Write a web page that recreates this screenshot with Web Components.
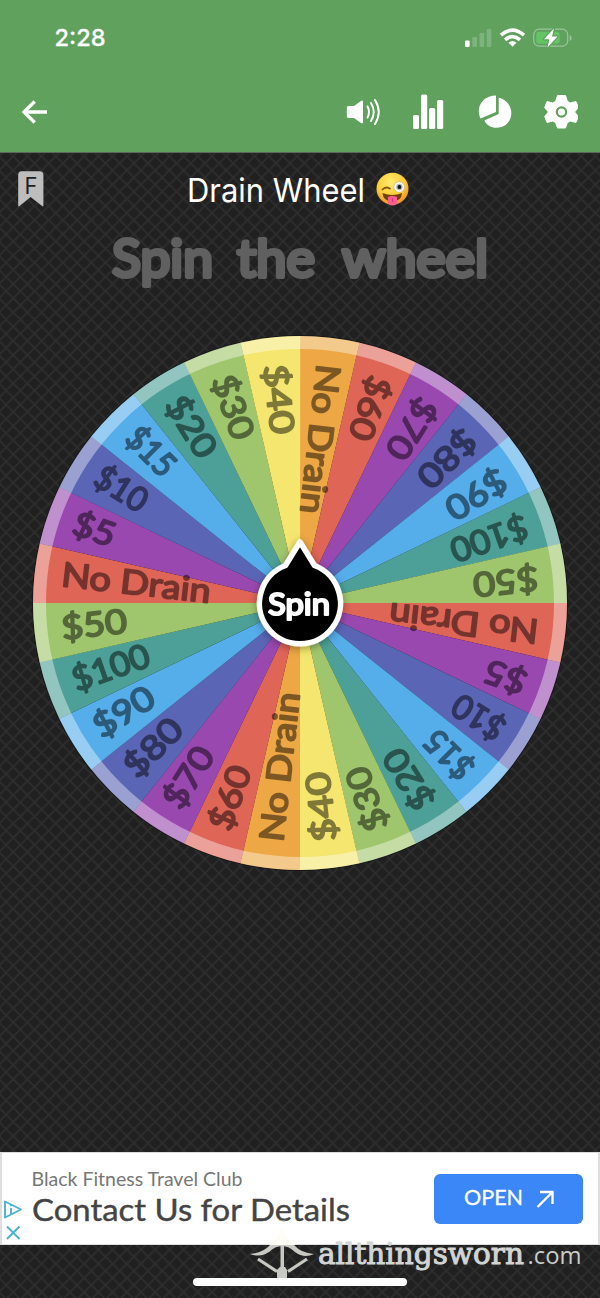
<!DOCTYPE html>
<html lang="en"><head><meta charset="utf-8"><title>Drain Wheel</title>
<style>html,body{margin:0;width:600px;height:1298px;overflow:hidden;background:#212121}</style></head>
<body><wheel-app></wheel-app>
<script>
const define=(name,html)=>customElements.define(name,class extends HTMLElement{
 constructor(){super();this.attachShadow({mode:'open'}).innerHTML=html;}
});

define('status-bar',`<style>:host{display:flex;height:76px;box-sizing:border-box;padding:0 27px 0 54px;align-items:center;justify-content:space-between}svg{display:block}</style>
<svg width="60" height="30"><text x="0.500" y="23" textLength="51" lengthAdjust="spacingAndGlyphs" font-family="Inter,sans-serif" font-size="23" font-weight="500" stroke="#fff" stroke-width=".3" fill="#fff">2:28</text></svg>
<svg width="112" height="24" viewBox="461 26 112 24">
<rect x="465" y="40.500" width="4.700" height="6.500" rx="1.200" fill="#fff"/><g fill="#7fb37d"><rect x="472.300" y="37" width="4.700" height="10" rx="1.200"/><rect x="479.500" y="33" width="4.700" height="14" rx="1.200"/><rect x="486.700" y="29" width="4.700" height="18" rx="1.200"/></g>
<g fill="none" stroke="#fff" stroke-width="3.600"><path d="M501 35.200Q512.500 25 524 35.200"/><path d="M505 39.800Q512.500 33.500 520 39.800"/></g><path d="M508.500 42.700Q512.500 39.500 516.500 42.700L512.500 46.800Z" fill="#fff"/>
<rect x="533.700" y="29.200" width="34" height="17" rx="5.500" fill="none" stroke="#9cc59b" stroke-width="1.200"/><rect x="536.200" y="31.700" width="23.500" height="12" rx="3" fill="#63c466"/><path d="M569.700 35v6q2-.8 2-3t-2-3" fill="#9cc59b"/>
<path d="M554 28.500L544 39.200h5.300L547.500 47.500 557.500 36.500H552Z" fill="#fff" stroke="#5fa15d" stroke-width="2.400" paint-order="stroke" stroke-linejoin="round"/></svg>`);

define('tool-bar',`<style>:host{display:flex;height:76px;padding:0 22px 5px 21px;box-sizing:border-box;align-items:center;justify-content:space-between}nav{display:flex;gap:32px;align-items:center}svg{display:block}</style>
<svg width="28" height="26" viewBox="0 0 28 26"><path d="M26 13H3M13.700 2.500L3 13l10.700 10.500" fill="none" stroke="#fff" stroke-width="3.400"/></svg>
<nav>
<svg width="34" height="36" viewBox="346 94 34 36" fill="#fff"><path d="M348.500 106h5.500l7-5q2-1.300 2 1v20q0 2.300-2 1l-7-5h-5.500q-1.700 0-1.700-1.700v-8.600q0-1.700 1.700-1.700"/><g fill="none" stroke="#fff" stroke-width="2" stroke-linecap="round"><path d="M367.500 106.500q3 5.500 0 11"/><path d="M371 103q5.500 9 0 18"/><path d="M375 100q7.500 12 0 24"/></g></svg>
<svg width="34" height="36" viewBox="412 94 34 36" fill="#fff"><rect x="413" y="115" width="6" height="14" rx="1.500"/><rect x="421" y="94.500" width="6.200" height="34.500" rx="1.500"/><rect x="429" y="108" width="6.200" height="21" rx="1.500"/><rect x="437" y="100" width="6.200" height="29" rx="1.500"/></svg>
<svg width="34" height="36" viewBox="478 94 34 36" fill="#fff"><path d="M496 95.500V112L480.500 118.500C475 107 483 95.500 496 95.500Z"/><path d="M498.700 97.700C514 101 516 122 501.500 127C494 129.500 487 126 484.300 120.500L498.700 114Z"/></svg>
<svg width="34" height="36" viewBox="544 94 34 36"><path d="M557.500 95.500h8l1.800 5.700 3 1.700 5.700-1.300 2.300 6-3.700 4.400 3.700 4.400-2.300 6-5.700-1.300-3 1.700-1.800 5.200h-8l-1.800-5.200-3-1.700-5.700 1.300-2.300-6 3.700-4.400-3.700-4.400 2.300-6 5.700 1.300 3-1.700Z" fill="#fff" stroke="#fff" stroke-linejoin="round"/><circle cx="561.500" cy="112" r="4.700" fill="#fff" stroke="#5fa15d" stroke-width="2.200"/></svg>
</nav>`);

define('app-header',`<style>:host{display:block;height:153px;background:#5fa15d;border-bottom:1px solid #5c665c;box-sizing:border-box}</style><status-bar></status-bar><tool-bar></tool-bar>`);

define('wheel-heading',`<style>:host{display:grid;grid-template-columns:44px 1fr 48px;padding:17px 0 0;height:56px;box-sizing:content-box}svg{display:block;overflow:visible}.title{justify-self:center;display:flex;gap:4px}</style>
<svg width="44" height="40" viewBox="0 170 44 40"><path d="M21.500 171.200h18.300q3.600 0 3.600 3.600v30.600q0 1.600-1.300.6L30.600 197 19.500 206q-1.300 1-1.300-.6V174.800q0-3.600 3.300-3.600" fill="#bdbdbd"/><text x="24.500" y="193.800" font-family="Inter,sans-serif" font-size="22.500" textLength="13" lengthAdjust="spacingAndGlyphs" fill="#212121">F</text></svg>
<div class="title"><svg width="185" height="46"><text x="0" y="31.500" textLength="178" lengthAdjust="spacingAndGlyphs" font-family="Inter,sans-serif" font-size="33" fill="#fff">Drain Wheel</text></svg>
<svg width="33" height="40" viewBox="376 170 33 40" aria-label="winking face with tongue"><defs><radialGradient id="e" cx="45%" cy="30%" r="72%"><stop stop-color="#ffed72"/><stop offset=".6" stop-color="#fdcc35"/><stop offset="1" stop-color="#e98b25"/></radialGradient></defs><circle cx="392.500" cy="188.700" r="16" fill="url(#e)"/><path d="M382.500 193q10 4 19.500 0-.5 8.500-9.700 8.500T382.500 193" fill="#70400d"/><path d="M388 197q4-2 9 0v5q0 3.600-4.500 3.600t-4.500-3.600Z" fill="#fa5b92"/><path d="M392.500 198v4" stroke="#d63672" fill="none"/><path d="M382 190q4-4.500 8.500-1" fill="none" stroke="#8a5518" stroke-width="1.800"/><circle cx="399.200" cy="187" r="5.300" fill="#fff" stroke="#c0a070" stroke-width=".5"/><circle cx="399.400" cy="187" r="3.200" fill="#adb7c0"/><circle cx="399.400" cy="187" r="1.900" fill="#151515"/></svg></div>`);

define('spin-prompt',`<style>:host{display:flex;justify-content:center;height:74px}</style>
<svg width="384" height="74"><g fill="#606060" stroke="#606060" stroke-width="4.200" stroke-linejoin="round" font-family="Lato,sans-serif" font-weight="400" font-size="52"><text x="4" y="51" textLength="101" lengthAdjust="spacingAndGlyphs">Spin</text><text x="129" y="51" textLength="78" lengthAdjust="spacingAndGlyphs">the</text><text x="234" y="51" textLength="146" lengthAdjust="spacingAndGlyphs">wheel</text></g></svg>`);

customElements.define('prize-wheel',class extends HTMLElement{
 constructor(){super();const root=this.attachShadow({mode:'open'});
 const colors=['#eda744','#df6557','#9948b0','#5b65b5','#55adea','#4da097','#a0c66d'];
 const first=['No Drain','$60','$70','$80','$90','$100','$50'];
 const second=['No Drain','$5','$10','$15','$20','$30','$40'];
 const ext=['#df6557','#9948b0','#5b65b5','#55adea','#4da097','#a0c66d','#f4e66e'];
 const lens={'No Drain':150,'$100':80,'$5':43,'$10':56,'$15':55,'$40':70,'$80':68};
 const names=[...first,...second,...first,...second],fills=[...colors,...ext,...colors,...ext];
 const step=360/28,p=(r,a)=>[r*Math.sin(a*Math.PI/180),-r*Math.cos(a*Math.PI/180)].map(v=>v.toFixed(2)).join(' ');
 let slices='',labels='';
 names.forEach((name,i)=>{const a=i*step;
  slices+=`<path fill="${fills[i]}" d="M0 0L${p(267,a)}A267 267 0 0 1 ${p(267,a+step+.04)}Z"/>`;
  labels+=`<text transform="rotate(${(a+step/2-270).toFixed(2)})" x="-240" y="10" textLength="${lens[name]||66}" lengthAdjust="spacingAndGlyphs">${name}</text>`;
 });
 root.innerHTML=`<style>:host{display:flex;justify-content:center}svg{display:block;overflow:visible}</style>
 <svg width="536" height="536" viewBox="-268 -268 536 536"><defs><filter id="s" x="-20%" y="-20%" width="140%" height="140%"><feDropShadow dx="0" dy="2" stdDeviation="4" flood-opacity=".35"/></filter></defs>
 <circle r="268" fill="#181818"/>${slices}<circle r="260.500" fill="none" stroke="#fff" stroke-opacity=".39" stroke-width="13"/>
 <g fill="#000" stroke="#000" stroke-width="1.900" stroke-linejoin="round" opacity=".48" font-family="Lato,sans-serif" font-size="33.500" font-weight="400">${labels}</g>
 <path filter="url(#s)" d="M0-61L14.500-37.500A40.500 40.500 0 1 1-14.500-37.500Z" fill="#000" stroke="#fff" stroke-width="5.500" stroke-linejoin="round"/>
 <text x="-32" y="11.500" textLength="62" lengthAdjust="spacingAndGlyphs" fill="#fff" stroke="#fff" stroke-width="2.200" stroke-linejoin="round" font-family="Lato,sans-serif" font-size="31" font-weight="400">Spin</text></svg>`;
 }
});

define('wheel-stage',`<style>:host{display:block;height:999px}prize-wheel{padding-top:35px}</style><wheel-heading></wheel-heading><spin-prompt></spin-prompt><prize-wheel></prize-wheel>`);

define('ad-banner',`<style>:host{display:flex;height:93px;box-sizing:border-box;background:#fff;border:solid #ddd;border-width:1px 2px;align-items:center;justify-content:space-between;padding-right:15px}svg{display:block}.button{width:149px;height:50px;border-radius:6px;background:#3c87f7;display:flex;align-items:center;justify-content:center}</style>
<svg width="360" height="91" viewBox="2 1153 360 91"><g fill="none" stroke="#4cb1d4" stroke-width="1.900" stroke-linejoin="round"><path d="M5 1201.500V1217.500L21 1209.500Z"/><path d="M7 1226.500l12.500 12.500M19.500 1226.500L7 1239" stroke-width="2"/><path d="M11 1208v6"/><path d="M11 1204.500v1.800"/></g><g font-family="Lato,sans-serif"><text x="31.500" y="1186" font-size="19" fill="#777" textLength="211" lengthAdjust="spacingAndGlyphs">Black Fitness Travel Club</text><text x="32" y="1221" font-size="30.500" font-weight="400" stroke="#444" stroke-width=".4" fill="#444" textLength="318" lengthAdjust="spacingAndGlyphs">Contact Us for Details</text></g></svg>
<div class="button"><svg width="92" height="30"><text x="1" y="21" font-family="Lato,sans-serif" font-size="21.500" fill="#fff" stroke="#fff" stroke-width=".3" textLength="59" lengthAdjust="spacingAndGlyphs">OPEN</text><path d="M74.500 23L89.500 8M77 8h12.500v12" fill="none" stroke="#fff" stroke-width="2.400"/></svg></div>`);

define('water-mark',`<style>:host{position:absolute;left:250px;top:1216px}svg{display:block}</style>
<svg width="336" height="65" viewBox="250 1216 336 65"><path d="M276 1218.500q6 4 11 0-5 5-11 0" fill="#c8c9c2"/>
<path d="M269 1245Q278 1238 281 1227Q286 1238 296 1245Z" fill="#fffef6"/>
<g fill="#c8c9c2"><path d="M250 1254Q263 1253 270 1245H294Q301 1253 314 1254Q304 1259 295 1252Q289 1246 282 1246Q275 1246 269 1252Q260 1258 250 1254Z"/><path d="M280.500 1245h3.500v24h-3.500z"/><path d="M277 1270l3-3h5l2 3v9h-10z"/></g><path d="M258 1259L277 1271.500M307 1259L288 1271.500" stroke="#c8c9c2" stroke-width="3.200"/>
<text x="318" y="1264" font-family="'DejaVu Serif',serif" font-size="30.500" stroke="#d2d5d4" stroke-width="1" fill="#d2d5d4" textLength="206" lengthAdjust="spacingAndGlyphs">allthingsworn</text><text x="527.500" y="1264" font-family="'Open Sans',sans-serif" font-size="24" fill="#c7cbca" textLength="54" lengthAdjust="spacingAndGlyphs">.com</text></svg>`);

define('home-indicator',`<style>:host{display:flex;justify-content:center;height:53px;padding-top:33px;box-sizing:border-box}i{display:block;width:214px;height:7.500px;border-radius:4px;background:#fff;position:relative;z-index:2}</style><i></i>`);

define('wheel-app',`<style>:host{display:block;position:relative;width:600px;height:1298px;isolation:isolate}.texture{position:absolute;inset:0;z-index:-1}ad-banner{position:relative}</style>
<svg class="texture" width="600" height="1298"><defs><pattern id="d" width="14.200" height="14.200" patternUnits="userSpaceOnUse" x="-1" y="0"><path d="M-1-1L15.200 15.200M15.200-1L-1 15.200" stroke="#2e2e2e" stroke-width="1.700"/></pattern></defs><rect width="600" height="1298" fill="#202020"/><rect width="600" height="1298" fill="url(#d)"/></svg>
<app-header></app-header><wheel-stage></wheel-stage><ad-banner></ad-banner><water-mark></water-mark><home-indicator></home-indicator>`);
</script></body></html>
